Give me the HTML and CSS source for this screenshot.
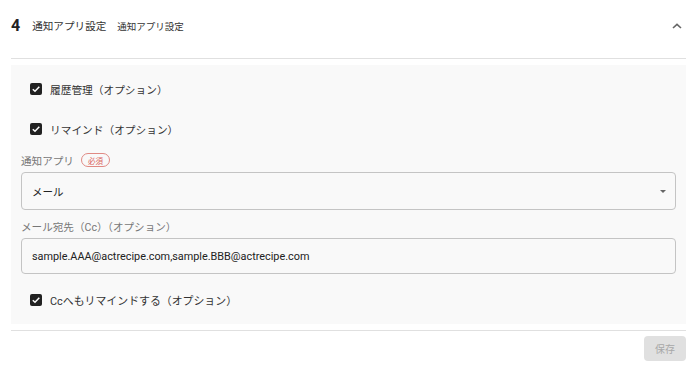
FILE: index.html
```html
<!DOCTYPE html>
<html lang="ja">
<head>
<meta charset="utf-8">
<link rel="stylesheet" href="styles.css">
</head>
<body>
<div class="section">
  <div class="header">
    <span class="num">4</span>
    <span class="title">通知アプリ設定</span>
    <span class="subtitle">通知アプリ設定</span>
    <span class="spacer"></span>
    <svg class="chevron" width="10" height="6" viewBox="0 0 10 6"><path d="M1 5 L5 1.3 L9 5" fill="none" stroke="#666" stroke-width="1.6"/></svg>
  </div>
  <div class="panel">
    <label class="check row1"><span class="box"><svg width="12" height="12" viewBox="0 0 12 12"><path d="M2.8 6.2 L5 8.3 L9.3 3.8" fill="none" stroke="#fff" stroke-width="1.5"/></svg></span><span class="clabel">履歴管理（オプション）</span></label>
    <label class="check row2"><span class="box"><svg width="12" height="12" viewBox="0 0 12 12"><path d="M2.8 6.2 L5 8.3 L9.3 3.8" fill="none" stroke="#fff" stroke-width="1.5"/></svg></span><span class="clabel">リマインド（オプション）</span></label>
    <div class="flabel lab1">通知アプリ<span class="badge">必須</span></div>
    <div class="field select"><span>メール</span><span class="arrow"></span></div>
    <div class="flabel lab2">メール宛先（Cc）（オプション）</div>
    <div class="field input"><span>sample.AAA@actrecipe.com,sample.BBB@actrecipe.com</span></div>
    <label class="check row3"><span class="box"><svg width="12" height="12" viewBox="0 0 12 12"><path d="M2.8 6.2 L5 8.3 L9.3 3.8" fill="none" stroke="#fff" stroke-width="1.5"/></svg></span><span class="clabel">Ccへもリマインドする（オプション）</span></label>
  </div>
  <div class="footer">
    <button class="save">保存</button>
  </div>
</div>
</body>
</html>
```
FILE: styles.css
```css
html, body {
  margin: 0;
  padding: 0;
  background: #fff;
}
body {
  font-family: Roboto, "Noto Sans CJK JP", sans-serif;
  color: #333;
  width: 693px;
  height: 369px;
  overflow: hidden;
}
.section {
  padding: 0 7px 0 11px;
}
.header {
  height: 59px;
  box-sizing: border-box;
  padding-bottom: 7px;
  border-bottom: 1px solid #e0e0e0;
  display: flex;
  align-items: center;
}
.num {
  font-size: 16px;
  font-weight: 700;
  color: #222;
  margin-right: 12px;
}
.title {
  font-size: 10.6px;
  color: #333;
  margin-right: 11px;
}
.subtitle {
  font-size: 9.5px;
  color: #333;
}
.spacer { flex: 1; }
.chevron {
  margin-right: 4px;
  margin-top: 1px;
}
.panel {
  margin-top: 6px;
  background: #f9f9f9;
  padding: 14px 10px 14px 10px;
  display: flex;
  flex-direction: column;
}
.check {
  display: flex;
  align-items: center;
  height: 20px;
  padding-left: 9px;
}
.row2 { margin-top: 20px; }
.row3 { margin-top: 16px; }
.box {
  width: 12px;
  height: 12px;
  background: #222;
  border-radius: 2px;
  display: flex;
  margin-right: 8px;
}
.clabel {
  font-size: 10.7px;
  color: #333;
}
.row3 .clabel {
  font-size: 10.9px;
}
.flabel {
  font-size: 10.6px;
  color: #777;
  height: 16px;
  display: flex;
  align-items: center;
}
.lab1 { margin-top: 13px; }
.lab2 { margin-top: 8px; }
.badge {
  margin-left: 7px;
  border: 1px solid #e08a84;
  color: #d9635b;
  border-radius: 8px;
  font-size: 7.5px;
  height: 14px;
  display: inline-flex;
  align-items: center;
  box-sizing: border-box;
  width: 29px;
  justify-content: center;
}
.field {
  margin-top: 4px;
  border: 1px solid #c4c4c4;
  border-radius: 4px;
  box-sizing: border-box;
  display: flex;
  align-items: center;
  padding: 0 10px;
  font-size: 10.5px;
  color: #222;
}
.select {
  height: 38px;
  justify-content: space-between;
}
.arrow {
  width: 0;
  height: 0;
  border-left: 3.5px solid transparent;
  border-right: 3.5px solid transparent;
  border-top: 3.5px solid #666;
  margin-right: -1px;
}
.input {
  height: 36px;
  font-size: 10.85px;
}
.footer {
  margin-top: 6px;
  border-top: 1px solid #e0e0e0;
  display: flex;
  justify-content: flex-end;
  padding-top: 5px;
}
.save {
  width: 42px;
  height: 25px;
  border: none;
  border-radius: 4px;
  background: #e0e0e0;
  color: #a8a8a8;
  font-family: Roboto, "Noto Sans CJK JP", sans-serif;
  font-size: 10px;
  padding: 0;
}
```
